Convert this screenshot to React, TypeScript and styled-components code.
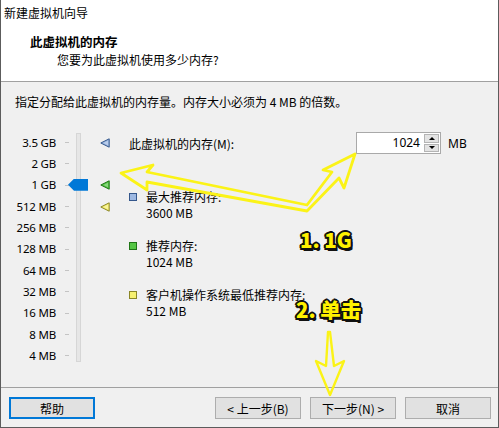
import React from "react";
import styled, { createGlobalStyle } from "styled-components";

const GlobalStyle = createGlobalStyle`
  html, body {
    margin: 0;
    padding: 0;
    background: #f0f0f0;
  }
  body {
    font-family: "Noto Sans CJK SC", "Noto Sans", sans-serif;
    font-size: 12px;
    color: #000;
  }
`;

const ROW = 21.34;

type Marker = "blue" | "green" | "yellow";

const scaleRows: { label: string; marker?: Marker }[] = [
    { label: "3.5 GB", marker: "blue" },
    { label: "2 GB" },
    { label: "1 GB", marker: "green" },
    { label: "512 MB", marker: "yellow" },
    { label: "256 MB" },
    { label: "128 MB" },
    { label: "64 MB" },
    { label: "32 MB" },
    { label: "16 MB" },
    { label: "8 MB" },
    { label: "4 MB" },
];

const markerColors: Record<Marker, { fill: string; edge: string }> = {
    blue: { fill: "#9db8e2", edge: "#34578c" },
    green: { fill: "#55c645", edge: "#1f7516" },
    yellow: { fill: "#f6f070", edge: "#8a8626" },
};

const legend: { color: Marker; title: string; value: string }[] = [
    { color: "blue", title: "最大推荐内存:", value: "3600 MB" },
    { color: "green", title: "推荐内存:", value: "1024 MB" },
    { color: "yellow", title: "客户机操作系统最低推荐内存:", value: "512 MB" },
];

export default function App() {
    return (
        <>
            <GlobalStyle/>
            <Window>
                <Header>
                    <WindowTitle>新建虚拟机向导</WindowTitle>
                    <PageTitle>此虚拟机的内存</PageTitle>
                    <PageSubtitle>您要为此虚拟机使用多少内存?</PageSubtitle>
                </Header>

                <Body>
                    <Intro>指定分配给此虚拟机的内存量。内存大小必须为 4 MB 的倍数。</Intro>
                    <Main>
                        <Scale>
                            <Track style={{ gridRow: `1 / ${scaleRows.length + 1}` }}/>
                            {scaleRows.map((r, i) => (
                                <React.Fragment key={r.label}>
                                    <ScaleLabel style={{ gridRow: i + 1 }}>{r.label}</ScaleLabel>
                                    <TickCell style={{ gridRow: i + 1 }}><Tick/></TickCell>
                                    <MarkerCell style={{ gridRow: i + 1 }}>
                                        {r.marker && <MarkerIcon kind={r.marker}/>}
                                    </MarkerCell>
                                </React.Fragment>
                            ))}
                            <Thumb/>
                        </Scale>

                        <Details>
                            <MemoryRow>
                                <MemoryLabel>此虚拟机的内存(M):</MemoryLabel>
                                <SpinBox>
                                    <SpinInput>1024</SpinInput>
                                    <SpinButtons>
                                        <SpinButton><Arrow $dir="up"/></SpinButton>
                                        <SpinButton><Arrow $dir="down"/></SpinButton>
                                    </SpinButtons>
                                </SpinBox>
                                <Unit>MB</Unit>
                            </MemoryRow>

                            <Legend>
                                {legend.map(l => (
                                    <LegendItem key={l.title}>
                                        <Swatch $fill={markerColors[l.color].fill} $edge={markerColors[l.color].edge}/>
                                        <LegendText>
                                            <div>{l.title}</div>
                                            <div>{l.value}</div>
                                        </LegendText>
                                    </LegendItem>
                                ))}
                            </Legend>
                        </Details>
                    </Main>
                </Body>

                <Footer>
                    <Button $focused>帮助</Button>
                    <Spacer/>
                    <Button>&lt; 上一步(B)</Button>
                    <Button>下一步(N) &gt;</Button>
                    <Button>取消</Button>
                </Footer>

                <Annotations width="499" height="428" viewBox="0 0 499 428">
                    <path
                        d="M121 173 L153 165 L147 172 L307 205 L332 172 L323 170 L355 154 L344 188 L339 178 L307 211 L147 182 L147 190 Z"
                        fill="none" stroke="#fbf317" strokeWidth="2.8" strokeLinejoin="round"/>
                    <path
                        d="M328 332 L326 366 L316 361 L330 395 L344 361 L334 366 L330 332 Z"
                        fill="none" stroke="#fbf317" strokeWidth="2.4" strokeLinejoin="round"/>
                </Annotations>
                <Callout style={{ left: 299, top: 227 }}>1. 1G</Callout>
                <Callout style={{ left: 295, top: 297 }}>2. 单击</Callout>
            </Window>
        </>
    );
}

function MarkerIcon({ kind }: { kind: Marker }) {
    const c = markerColors[kind];
    return (
        <svg width="10" height="10" viewBox="0 0 10 10">
            <path d="M0.8 5 L9.2 0.8 L9.2 9.2 Z" fill={c.fill} stroke={c.edge} strokeWidth="1"/>
            <path d="M3.5 5 L8 2.8 L8 7.2 Z" fill="#fff" opacity="0.3"/>
        </svg>
    );
}

const Window = styled.div`
  position: relative;
  width: 499px;
  height: 428px;
  box-sizing: border-box;
  border: 1px solid #5c5c5c;
  border-top: none;
  display: flex;
  flex-direction: column;
  background: #f0f0f0;
  overflow: hidden;
`

const Header = styled.div`
  height: 82px;
  box-sizing: border-box;
  background: #fff;
  border-bottom: 1px solid #a0a0a0;
  padding: 5px 0 0 3px;
  line-height: 16px;
`

const WindowTitle = styled.div`
  font-size: 12px;
`

const PageTitle = styled.div`
  margin: 13px 0 0 26px;
  font-weight: bold;
  font-size: 12.5px;
`

const PageSubtitle = styled.div`
  margin: 2px 0 0 53px;
`

const Body = styled.div`
  flex: 1;
  display: flex;
  flex-direction: column;
`

const Intro = styled.div`
  margin: 11px 0 0 14px;
  line-height: 17px;
`

const Main = styled.div`
  display: flex;
  margin-top: 22px;
`

const Scale = styled.div`
  position: relative;
  display: grid;
  grid-template-columns: 55px 14px 11px 29px;
  grid-auto-rows: ${ROW}px;
  align-items: center;
`

const ScaleLabel = styled.div`
  grid-column: 1;
  text-align: right;
  line-height: 16px;
  font-family: "Noto Sans", "Noto Sans CJK SC", sans-serif;
  font-size: 11.5px;
  letter-spacing: -0.2px;
`

const TickCell = styled.div`
  grid-column: 2;
  display: flex;
  justify-content: flex-end;
  padding-right: 1px;
`

const Tick = styled.div`
  width: 4px;
  height: 1px;
  background: #c4c4c4;
`

const Track = styled.div`
  grid-column: 3;
  justify-self: end;
  align-self: stretch;
  width: 3px;
  margin: 1px 0 5px;
  background: #e6e6e6;
  border: 1px solid #d6d6d6;
`

const MarkerCell = styled.div`
  grid-column: 4;
  display: flex;
  justify-content: flex-end;
  align-items: center;
`

const Thumb = styled.div`
  position: absolute;
  left: 67px;
  top: ${ROW * 2 + 4}px;
  width: 20px;
  height: 12px;
  background: #0078d7;
  clip-path: polygon(0 50%, 6px 0, 100% 0, 100% 100%, 6px 100%);
`

const Details = styled.div`
  display: flex;
  flex-direction: column;
  padding-left: 19px;
`

const MemoryRow = styled.div`
  display: flex;
  align-items: center;
  height: 22px;
`

const MemoryLabel = styled.div`
  width: 227px;
`

const SpinBox = styled.div`
  display: flex;
  width: 85px;
  height: 22px;
  box-sizing: border-box;
  border: 1px solid #a9a9a9;
  background: #fff;
  padding: 1px;
`

const SpinInput = styled.div`
  flex: 1;
  text-align: right;
  padding-right: 4px;
  line-height: 18px;
  font-family: "Noto Sans", sans-serif;
  font-size: 12px;
`

const SpinButtons = styled.div`
  display: flex;
  flex-direction: column;
  width: 15px;
  gap: 1px;
`

const SpinButton = styled.div`
  flex: 1;
  display: flex;
  align-items: center;
  justify-content: center;
  background: #e3e3e3;
  border: 1px solid #b4b4b4;
`

const Arrow = styled.div<{ $dir: "up" | "down" }>`
  width: 0;
  height: 0;
  border-left: 3px solid transparent;
  border-right: 3px solid transparent;
  ${p => p.$dir === "up" ? "border-bottom: 3px solid #000;" : "border-top: 3px solid #000;"}
`

const Unit = styled.div`
  margin-left: 7px;
  font-family: "Noto Sans", sans-serif;
`

const Legend = styled.div`
  display: flex;
  flex-direction: column;
  gap: 17px;
  margin-top: 35px;
`

const LegendItem = styled.div`
  display: flex;
  gap: 9px;
`

const Swatch = styled.div<{ $fill: string; $edge: string }>`
  width: 6px;
  height: 6px;
  margin-top: 4px;
  background: ${p => p.$fill};
  border: 1px solid ${p => p.$edge};
`

const LegendText = styled.div`
  line-height: 16px;
`

const Footer = styled.div`
  height: 40px;
  box-sizing: border-box;
  border-top: 1px solid #a0a0a0;
  display: flex;
  align-items: flex-start;
  gap: 9px;
  padding: 9px 7px 0 8px;
`

const Spacer = styled.div`
  flex: 1;
`

const Button = styled.button<{ $focused?: boolean }>`
  width: 86px;
  height: 22px;
  box-sizing: border-box;
  padding: 0;
  font-family: "Noto Sans CJK SC", "Noto Sans", sans-serif;
  font-size: 12px;
  color: #000;
  background: #e1e1e1;
  border: ${p => p.$focused ? "2px solid #0078d7" : "1px solid #adadad"};
`

const Annotations = styled.svg`
  position: absolute;
  left: -1px;
  top: 0;
  pointer-events: none;
`

const Callout = styled.div`
  position: absolute;
  font-family: "Noto Sans CJK SC", sans-serif;
  font-weight: 900;
  font-size: 20.5px;
  line-height: 24px;
  color: #fff200;
  text-shadow: -2px 0 #111, 2px 0 #111, 0 -2px #111, 0 2px #111,
    -1.5px -1.5px #111, 1.5px -1.5px #111, -1.5px 1.5px #111, 1.5px 1.5px #111,
    2px 3px #111;
  white-space: nowrap;
`
